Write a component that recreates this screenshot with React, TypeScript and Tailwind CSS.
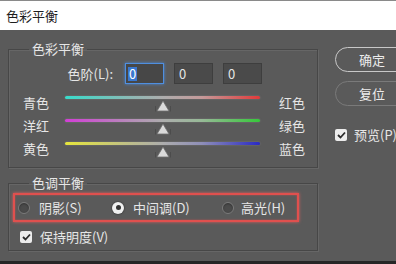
import React from "react";

const font = { fontFamily: '"Noto Sans CJK SC", "Noto Sans", sans-serif' };

function Thumb() {
  return (
    <svg width="20" height="12" viewBox="0 0 20 12" className="block">
      <path d="M2.5 11.5 L2.5 6 M17.5 11.5 L17.5 6" stroke="#4c4c4c" strokeWidth="1" />
      <path d="M10 1 L16 11 L4 11 Z" fill="#dadada" stroke="#707070" strokeWidth="0.8" strokeLinejoin="round" />
    </svg>
  );
}

function SliderRow({ left, right, track }: { left: string; right: string; track: string }) {
  return (
    <div className="flex items-center h-[23px]">
      <span className="w-[42px] pl-[14px] box-content shrink-0">{left}</span>
      <div className="w-[195px] h-[23px] flex flex-col shrink-0">
        <div className={`h-[3px] mt-[5px] rounded-full shadow-[0_0_2px_rgba(200,200,200,0.35)] ${track}`} />
        <div className="ml-[88px] mt-[1px]">
          <Thumb />
        </div>
      </div>
      <span className="ml-[19px]">{right}</span>
    </div>
  );
}

function Radio({ checked }: { checked?: boolean }) {
  if (checked) {
    return (
      <span className="w-[12px] h-[12px] rounded-full bg-[#f0f0f0] flex items-center justify-center shrink-0 shadow-[0_0_2px_#222]">
        <span className="w-[5px] h-[5px] rounded-full bg-[#333]" />
      </span>
    );
  }
  return (
    <span className="w-[12px] h-[12px] rounded-full bg-[#4b4b4b] border border-[#7a7a7a] shrink-0 shadow-[inset_0_1px_2px_#333]" />
  );
}

function Check() {
  return (
    <span className="w-[12px] h-[12px] rounded-[2px] bg-[#ececec] flex items-center justify-center shrink-0">
      <svg width="9" height="8" viewBox="0 0 9 8">
        <path d="M1 4 L3.5 6.5 L8 1.5" fill="none" stroke="#2a2a2a" strokeWidth="1.8" />
      </svg>
    </span>
  );
}

const fieldsetCls =
  "border border-[#474747] shadow-[inset_1px_1px_0_#666,1px_1px_0_#666] px-0 mx-0";

export default function App() {
  return (
    <div
      className="w-[396px] h-[264px] flex flex-col overflow-hidden bg-[#5a5a5a] text-[13px] text-[#e6e6e6]"
      style={font}
    >
      {/* Title bar */}
      <div className="h-[30px] shrink-0 bg-white border-t border-[#8a8a8a] flex items-center pl-[6px] text-[13px] text-[#1e1e1e]">
        色彩平衡
      </div>

      <div className="flex flex-1">
        {/* Left column */}
        <div className="w-[310px] ml-[8px] shrink-0">
          <fieldset className={`mt-[11px] h-[127px] ${fieldsetCls}`}>
            <legend className="ml-[20px] px-[3px] h-[16px] leading-[16px]">色彩平衡</legend>
            <div className="flex items-center mt-[6px] h-[21px]">
              <span className="w-[104px] text-right shrink-0">色阶(L):</span>
              <div className="ml-[12px] flex gap-[10px]">
                <div className="w-[39px] h-[21px] bg-[#474747] border border-[#4f8fe0] shadow-[0_0_3px_#4a88d8] flex items-center pl-[2px]">
                  <span className="bg-[#3a78d0] text-white leading-[14px] px-[1px]">0</span>
                </div>
                <div className="w-[39px] h-[21px] bg-[#4a4a4a] border border-[#3e3e3e] flex items-center pl-[4px]">
                  0
                </div>
                <div className="w-[39px] h-[21px] bg-[#4a4a4a] border border-[#3e3e3e] flex items-center pl-[4px]">
                  0
                </div>
              </div>
            </div>
            <div className="mt-[7px]">
              <SliderRow
                left="青色"
                right="红色"
                track="bg-[linear-gradient(to_right,#38dccb,#8fb8b4_35%,#adadad_50%,#c49a9a_70%,#e23a3a)]"
              />
              <SliderRow
                left="洋红"
                right="绿色"
                track="bg-[linear-gradient(to_right,#d23ed6,#b58fb8_35%,#adadad_50%,#97b997_70%,#36c83a)]"
              />
              <SliderRow
                left="黄色"
                right="蓝色"
                track="bg-[linear-gradient(to_right,#e6e63c,#bcbc8e_35%,#adadad_50%,#8f8fb8_70%,#2a2ac4)]"
              />
            </div>
          </fieldset>

          <fieldset className={`mt-[7px] h-[76px] ${fieldsetCls}`}>
            <legend className="ml-[20px] px-[3px] h-[16px] leading-[16px]">色调平衡</legend>
            <div className="ml-[4px] mt-[2px] w-[286px] h-[29px] border-2 border-[#e0504e] shadow-[0_0_3px_#e06060,inset_0_0_2px_#c05050] flex items-center pl-[3px]">
              <label className="w-[94px] flex items-center gap-[9px]">
                <Radio />
                <span>阴影(S)</span>
              </label>
              <label className="w-[110px] flex items-center gap-[9px]">
                <Radio checked />
                <span>中间调(D)</span>
              </label>
              <label className="flex items-center gap-[7px]">
                <Radio />
                <span>高光(H)</span>
              </label>
            </div>
            <label className="flex items-center gap-[8px] ml-[11px] mt-[5px]">
              <Check />
              <span>保持明度(V)</span>
            </label>
          </fieldset>
        </div>

        {/* Right column */}
        <div className="ml-[17px] pt-[17px] flex flex-col shrink-0">
          <button className="w-[74px] h-[25px] rounded-full border-[1.5px] border-[#c8c8c8] flex items-center justify-center text-[#ececec]">
            确定
          </button>
          <button className="mt-[9px] w-[74px] h-[25px] rounded-full border-[1.5px] border-[#7a7a7a] flex items-center justify-center text-[#ececec]">
            复位
          </button>
          <label className="mt-[19px] flex items-center gap-[7px]">
            <Check />
            <span>预览(P)</span>
          </label>
        </div>
      </div>

      <div className="h-[3px] shrink-0 bg-[#262626]" />
    </div>
  );
}
